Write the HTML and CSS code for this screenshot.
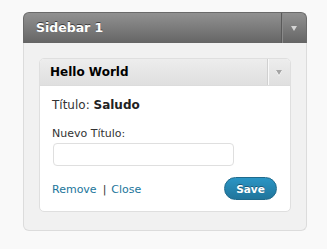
FILE: index.html
```html
<!DOCTYPE html>
<html>
<head>
<meta charset="utf-8">
<link rel="stylesheet" href="styles.css">
</head>
<body>
<div class="sidebar">
  <div class="sb-head">
    <div class="sb-title">Sidebar 1</div>
    <div class="sb-toggle"><span class="arrow arrow-dark"></span></div>
  </div>
  <div class="sb-body">
    <div class="widget">
      <div class="w-head">
        <div class="w-title">Hello World</div>
        <div class="w-toggle"><span class="arrow arrow-light"></span></div>
      </div>
      <div class="w-body">
        <p class="current">Título: <strong>Saludo</strong></p>
        <label class="lbl">Nuevo Título:</label>
        <input class="field" type="text">
        <div class="actions">
          <div class="links"><a href="#">Remove</a><span class="sep">|</span><a href="#">Close</a></div>
          <button class="save">Save</button>
        </div>
      </div>
    </div>
  </div>
</div>
</body>
</html>
```

FILE: styles.css
```css
html, body {
  margin: 0;
  padding: 0;
  background: #f9f9f9;
  font-family: "DejaVu Sans", Verdana, sans-serif;
}
body {
  padding: 12px 0 0 23px;
}
.sidebar {
  width: 284px;
  box-sizing: border-box;
}
.sb-head {
  display: flex;
  height: 31px;
  border-radius: 6px 6px 0 0;
  background: linear-gradient(to bottom, #919191, #656565);
  border: 1px solid #6a6a6a;
  border-bottom: none;
  box-sizing: border-box;
}
.sb-title {
  flex: 1;
  color: #fff;
  font-weight: bold;
  font-size: 12.5px;
  line-height: 30px;
  padding-left: 12px;
  text-shadow: 0 -1px 0 #3f3f3f;
}
.sb-toggle {
  width: 24px;
  border-left: 1px solid #5a5a5a;
  box-shadow: inset 1px 0 0 #8a8a8a;
  display: flex;
  align-items: center;
  justify-content: center;
}
.arrow {
  width: 0;
  height: 0;
  border-left: 3.5px solid transparent;
  border-right: 3.5px solid transparent;
  border-top: 5px solid #d4d4d4;
}
.arrow-light {
  border-top-color: #a5a5a5;
  filter: drop-shadow(0 1px 0 #ffffff);
}
.sb-body {
  background: #f1f1f1;
  border: 1px solid #dcdcdc;
  border-top: none;
  border-radius: 0 0 6px 6px;
  padding: 15px 16px 18px 15px;
}
.widget {
  background: #fff;
  border: 1px solid #dfdfdf;
  border-radius: 5px;
  width: 252px;
  box-sizing: border-box;
}
.w-head {
  display: flex;
  height: 26px;
  background: linear-gradient(to bottom, #ededed, #dfdfdf);
  border-bottom: 1px solid #dcdcdc;
  border-radius: 4px 4px 0 0;
}
.w-title {
  flex: 1;
  font-weight: bold;
  font-size: 12px;
  line-height: 26px;
  padding-left: 10px;
  color: #000;
}
.w-toggle {
  width: 22px;
  border-left: 1px solid #d0d0d0;
  box-shadow: inset 1px 0 0 #f9f9f9;
  display: flex;
  align-items: center;
  justify-content: center;
}
.w-body {
  padding: 12px 12px 0 12px;
  height: 125px;
  box-sizing: border-box;
}
.current {
  margin: 0;
  font-size: 12px;
  line-height: 14px;
  color: #333;
}
.current strong {
  color: #222;
}
.lbl {
  display: block;
  margin-top: 15px;
  font-size: 11px;
  line-height: 13px;
  color: #333;
}
.field {
  display: block;
  margin: 3px 0 0 1px;
  width: 181px;
  height: 23px;
  box-sizing: border-box;
  border: 1px solid #dfdfdf;
  border-radius: 4px;
  background: #fff;
  padding: 0;
}
.actions {
  display: flex;
  justify-content: space-between;
  align-items: center;
  margin-top: 11px;
}
.links {
  font-size: 11px;
  color: #333;
  padding-top: 2px;
}
.links a {
  color: #21759b;
  text-decoration: none;
}
.sep {
  margin: 0 5px 0 6px;
}
.save {
  width: 53px;
  height: 23px;
  border-radius: 12px;
  border: 1px solid #1f6a8c;
  background: linear-gradient(to bottom, #2a95c5, #21759b);
  color: #fff;
  font-family: "DejaVu Sans", Verdana, sans-serif;
  font-weight: bold;
  font-size: 10.5px;
  text-shadow: 0 -1px 0 #1a5a78;
  padding: 0;
  margin-right: 1px;
}
```
